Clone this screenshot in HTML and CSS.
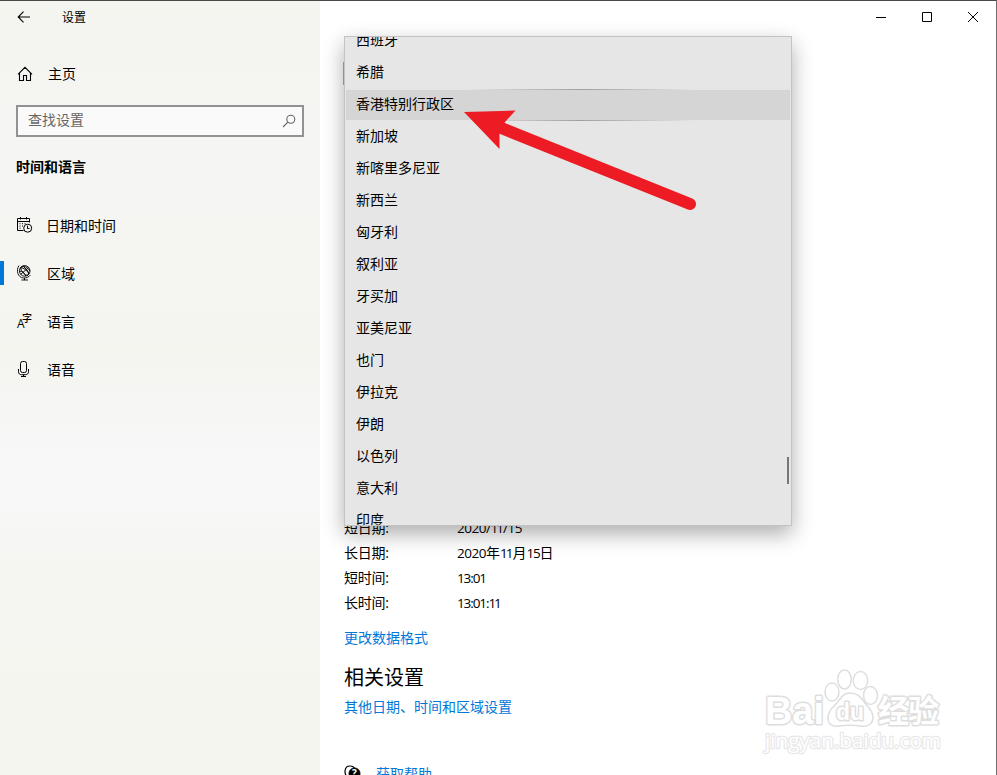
FILE: index.html
```html
<!DOCTYPE html>
<html lang="zh-CN">
<head>
<meta charset="utf-8">
<title>设置</title>
<link rel="stylesheet" href="styles.css">
</head>
<body>
<div class="window">
  <aside class="sidebar">
    <header class="titlebar">
      <svg class="back" width="14" height="14" viewBox="0 0 14 14"><path d="M13 7H1.2M6.5 1.7 1.2 7l5.3 5.3"/></svg>
      <span>设置</span>
    </header>
    <a class="home">
      <svg width="16" height="16" viewBox="0 0 16 16"><path d="M1 8.3 8 1.3l7 7M2.5 7v7.5h4V9.5h3v5h4V7"/></svg>
      <span>主页</span>
    </a>
    <div class="search">
      <span>查找设置</span>
      <svg width="14" height="14" viewBox="0 0 14 14"><circle cx="8.8" cy="5.2" r="4"/><path d="M5.900 8.100 1 13"/></svg>
    </div>
    <h2 class="section">时间和语言</h2>
    <nav class="nav">
      <a class="nav-item date">
        <svg width="16" height="16" viewBox="0 0 16 16"><path d="M6.500 13.500h-6v-12h12v4M.5 4.500h12M3.500 0v2.500M9.500 0v2.500M2.500 6.700h1M5 6.700h1M7.500 6.700h1M2.500 9h1M5 9h1M2.500 11.200h1"/><circle cx="10.700" cy="11.200" r="4"/><path d="M10.500 8.700v2.800h2"/></svg>
        <span>日期和时间</span>
      </a>
      <a class="nav-item active">
        <svg class="globe" width="16" height="16" viewBox="0 0 16 16"><circle cx="7.700" cy="5.900" r="5.300"/><ellipse cx="7.700" cy="5.900" rx="2.400" ry="5.300" transform="rotate(-38 7.700 5.900)"/><path d="M3.500 2.700c3 0 6.200 2.300 8.400 5.800M2.500 6.200c2.800-.2 5.200 1.800 6.300 4.900M6.200.9c3 .6 5.500 2.700 6.700 5.200M11.800 2.500 3.600 9.300M2 .5C-1.200 5 .6 12.600 6.500 13c2.900.2 5.400-1 6.900-3M7.500 13v2M4.500 15h6.500"/></svg>
        <span>区域</span>
      </a>
      <a class="nav-item">
        <svg class="letters" width="16" height="16" viewBox="0 0 16 16"><text class="letter-a" x="0" y="15">A</text><text class="letter-z" x="5" y="9">字</text></svg>
        <span>语言</span>
      </a>
      <a class="nav-item">
        <svg width="16" height="17" viewBox="0 0 16 17"><rect x="3.500" y=".5" width="6" height="11" rx="2"/><path d="M1.500 8v2.500c0 2.200 1.200 3.200 3 3.200h4c1.800 0 3-1 3-3.200V8M6.500 13.700v2M4 15.500h5"/></svg>
        <span>语音</span>
      </a>
    </nav>
  </aside>
  <main class="content">
    <div class="controls">
      <svg width="12" height="12" viewBox="0 0 12 12"><path d="M1 6.500h10"/></svg>
      <svg width="12" height="12" viewBox="0 0 12 12"><path d="M1.500 1.500h9v9h-9z"/></svg>
      <svg width="12" height="12" viewBox="0 0 12 12"><path d="m1 1 10 10M11 1 1 11"/></svg>
    </div>
    <div class="country-field"></div>
    <dl class="formats">
      <dt>短日期:</dt><dd><i>2020/</i><i class="tight">11</i><i>/15</i></dd>
      <dt>长日期:</dt><dd><i>2020</i>年<i class="tight">11</i>月<i class="near">15</i>日</dd>
      <dt>短时间:</dt><dd><i class="time">13:01</i></dd>
      <dt>长时间:</dt><dd><i class="time">13:01:</i><i class="tight">11</i></dd>
    </dl>
    <a class="link change">更改数据格式</a>
    <h3 class="related">相关设置</h3>
    <a class="link other">其他日期、时间和区域设置</a>
    <a class="link help">
      <svg width="18" height="16" viewBox="0 0 18 16"><path class="bubble" d="M4.500 12.500C-.5 10-.2 1 6 1c2.500 0 4.200 1.100 5 3"/><circle cx="10.500" cy="8.500" r="5.500"/><text x="8" y="12">?</text></svg>
      <span>获取帮助</span>
    </a>
    <svg class="watermark" width="186" height="92" viewBox="0 0 186 92">
      <g class="outline">
        <ellipse cx="68" cy="24" rx="7" ry="9"/>
        <ellipse cx="80.500" cy="11.500" rx="6.800" ry="9.500"/>
        <ellipse cx="96.500" cy="12.500" rx="7.200" ry="9"/>
        <ellipse cx="106.500" cy="27.500" rx="7" ry="9"/>
        <path d="M86 25c-7 0-9 5-14 11-5 5-8 8-8 14 0 6 4 9 11 8 8-1 14-1 22 0 7 1 12-2 12-9 0-6-4-9-8-14-5-7-8-10-15-10Z"/>
        <text class="brand" x="1" y="56" textLength="59" lengthAdjust="spacingAndGlyphs">Bai</text>
        <text class="du" x="72" y="52" textLength="28" lengthAdjust="spacingAndGlyphs">du</text>
        <text class="exp" x="114" y="54" textLength="61">经验</text>
        <text class="site" x="1" y="80" textLength="176" lengthAdjust="spacingAndGlyphs">jingyan.baidu.com</text>
      </g>
    </svg>
  </main>
  <div class="dropdown">
    <ul class="options">
      <li>西班牙</li>
      <li>希腊</li>
      <li class="selected">香港特别行政区</li>
      <li>新加坡</li>
      <li>新喀里多尼亚</li>
      <li>新西兰</li>
      <li>匈牙利</li>
      <li>叙利亚</li>
      <li>牙买加</li>
      <li>亚美尼亚</li>
      <li>也门</li>
      <li>伊拉克</li>
      <li>伊朗</li>
      <li>以色列</li>
      <li>意大利</li>
      <li>印度</li>
    </ul>
    <div class="scroll-thumb"></div>
  </div>
  <svg class="arrow" width="240" height="110" viewBox="0 0 240 110"><path class="head" d="M4 12 55.500 10.500 45 22 39.500 34v15Z"/><path class="shaft" d="M40 27.500 230 104"/></svg>
</div>
</body>
</html>
```
FILE: styles.css
```css
* { box-sizing: border-box; }
body {
  margin: 0;
  font: 14px/20px "Open Sans", "Noto Sans CJK SC", sans-serif;
  color: #000;
}
svg { flex: none; fill: none; stroke: #000; stroke-width: 1; overflow: visible; }
.window {
  position: relative;
  display: flex;
  width: 997px;
  height: 775px;
  overflow: hidden;
  background: #fff;
  border-top: 1px solid #484848;
  border-right: 1px solid #6d6d6d;
}
.sidebar {
  width: 320px;
  background: linear-gradient(#f4f5ef 0, #f5f6f3 145px, #f5f6f2 270px, #f4f5ef 350px, #f6f7f5 410px, #f8f8f9 490px, #f5f6f1 570px, #f4f5ee 100%);
}
.titlebar {
  display: flex;
  align-items: center;
  gap: 31px;
  height: 32px;
  padding-left: 17px;
  font-size: 12px;
}
.titlebar span { padding-top: 2px; }
.home {
  display: flex;
  align-items: center;
  gap: 15px;
  margin-top: 21px;
  padding-left: 17px;
  height: 40px;
}
.home svg, .titlebar svg { stroke-width: 1.1; }
.search {
  display: flex;
  align-items: center;
  justify-content: space-between;
  width: 288px;
  height: 32px;
  margin: 11px 0 0 16px;
  padding: 0 8px 2px 10px;
  border: 2px solid #929292;
  background: #fafafa;
  color: #666;
}
.search svg { stroke: #666; stroke-width: 1.1; margin-top: 1px; margin-right: -2px; }
.section {
  margin: 20px 0 0 16px;
  font-size: 14px;
  font-weight: 700;
  line-height: 20px;
}
.nav { margin-top: 24px; }
.nav-item {
  display: flex;
  align-items: center;
  gap: 14px;
  height: 48px;
  padding-left: 17px;
}
.nav-item span { padding-top: 1px; }
.date { gap: 13px; }
.active { position: relative; }
.active::before {
  content: "";
  position: absolute;
  left: 0;
  top: 12px;
  width: 4px;
  height: 24px;
  background: #0078d7;
}
.globe { stroke-width: .9; }
.letters text { stroke: none; fill: #000; }
.letter-a { font: 12px "Open Sans"; }
.letter-z { font: 500 10px "Noto Sans CJK SC"; }
.content { flex: 1; padding-left: 24px; }
.controls {
  display: flex;
  justify-content: flex-end;
  gap: 34px;
  height: 32px;
  padding: 10px 17px 0 0;
}
.country-field {
  width: 300px;
  height: 23px;
  margin: 29px 0 0 -1px;
  border-left: 1px solid #aaa;
}
.formats {
  display: grid;
  grid-template-columns: 113px 1fr;
  grid-auto-rows: 25px;
  margin: 430px 0 0;
  line-height: 25px;
}
.formats dt { letter-spacing: -.25px; }
.formats dd { margin: 0; }
.formats i { font-style: normal; font-size: 13.5px; letter-spacing: -.45px; }
.formats .tight { letter-spacing: -2px; margin-right: 1px; }
.formats .near { letter-spacing: -1.3px; }
.formats .time { letter-spacing: -1.1px; }
.link { display: block; color: #0078d7; }
.change { margin-top: 13px; }
.related {
  margin: 15px 0 0;
  font-size: 20px;
  font-weight: 400;
  line-height: 30px;
}
.other { margin-top: 4px; }
.help {
  display: flex;
  align-items: flex-start;
  gap: 14px;
  margin-top: 47px;
}
.help svg { margin-top: 1px; }
.help circle { fill: #000; }
.help text { font: 700 10px "Open Sans"; fill: #fff; stroke: none; }
.bubble { stroke-width: 1.2; }
.watermark { position: absolute; left: 764px; top: 667px; }
.outline { fill: #fff; stroke: #dedede; stroke-width: 1.5; }
.outline text { paint-order: stroke; stroke-width: 3; stroke-linejoin: round; }
.outline .brand { font: 700 39px "Liberation Sans"; }
.outline .du { font: 700 24px "Liberation Sans"; }
.outline .exp { font: 700 31px "Noto Sans CJK SC"; }
.outline .site { font: 400 20px "Open Sans"; stroke: #e8e8e8; stroke-width: 2.4; }
.dropdown {
  position: absolute;
  left: 344px;
  top: 35px;
  width: 448px;
  height: 490px;
  overflow: hidden;
  border: 1px solid #c3c3c3;
  background: #e6e6e6;
  box-shadow: 0 8px 20px rgba(0, 0, 0, .32);
}
.options {
  margin: -13px 1px 0;
  padding: 0;
  list-style: none;
}
.options li { height: 32px; padding-left: 10px; line-height: 32px; }
.options .selected {
  position: relative;
  height: 30px;
  margin-top: 2px;
  line-height: 28px;
  background: #d5d5d5;
}
.selected::before, .selected::after {
  content: "";
  position: absolute;
  left: 120px;
  width: 230px;
  height: 1px;
  background: linear-gradient(90deg, transparent, #a0a0a0, transparent);
}
.selected::before { top: -1px; }
.selected::after { bottom: -1px; }
.scroll-thumb {
  position: absolute;
  right: 2px;
  top: 420px;
  width: 2px;
  height: 27px;
  background: #767676;
}
.arrow { position: absolute; left: 460px; top: 99px; stroke: none; }
.head { fill: #ed1c24; }
.shaft { stroke: #ed1c24; stroke-width: 12; stroke-linecap: round; }
```
